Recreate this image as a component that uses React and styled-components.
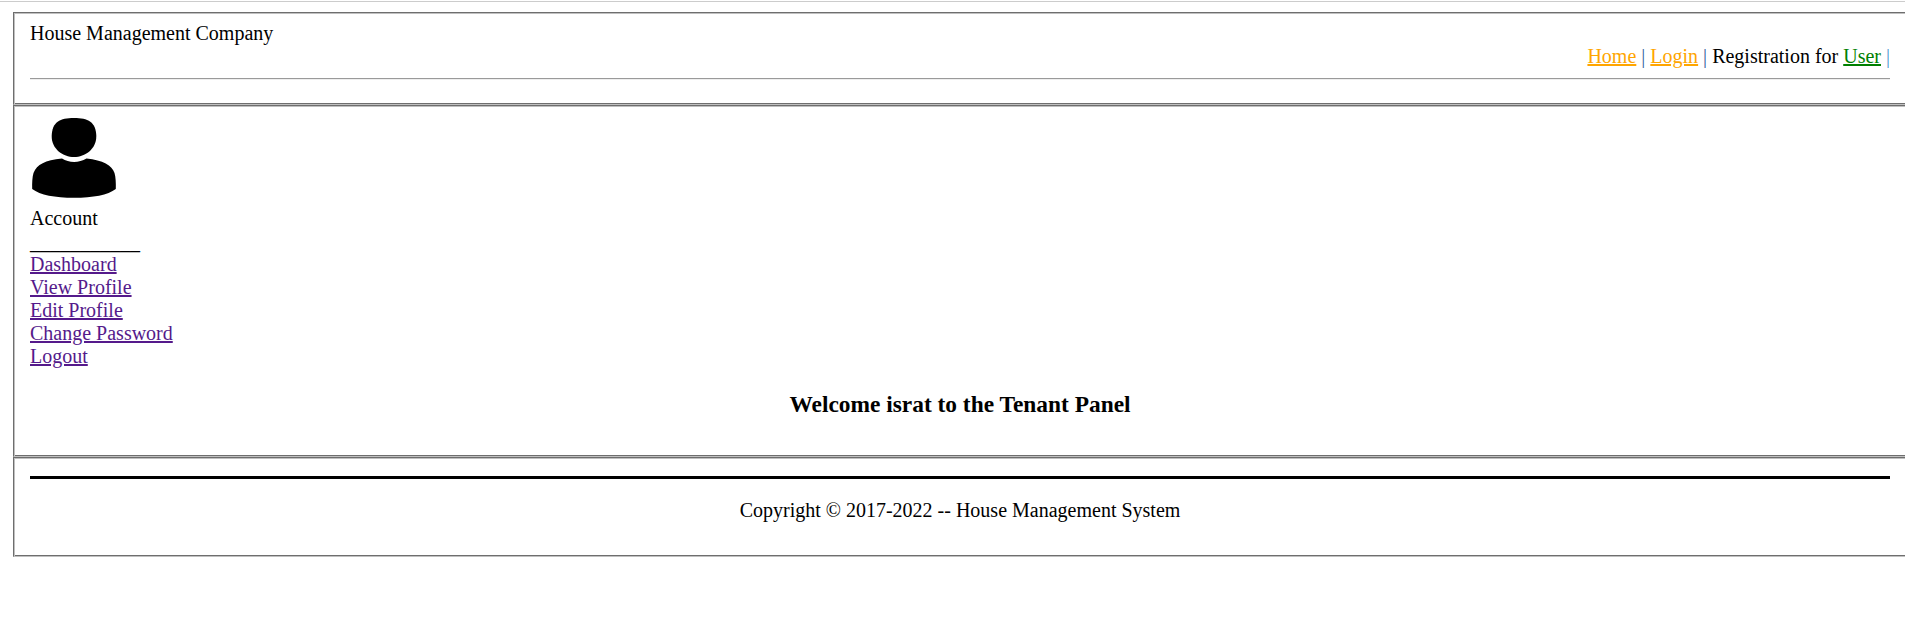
import React from "react";
import styled, { createGlobalStyle } from "styled-components";

const GlobalStyle = createGlobalStyle`
  html { overflow: hidden; background: #fff; }
  body {
    margin: 0;
    color: #000;
    font-family: "Liberation Serif", "Times New Roman", serif;
    font-size: 20px;
    line-height: 23px;
  }
`;

const Page = styled.div`
  box-sizing: border-box;
  height: 640px;
  overflow: hidden;
  padding: 11px 0 0 13px;
`;

const TopLine = styled.div`
  height: 1px;
  margin: -10px 0 10px -13px;
  background: #ccc;
`;

const Panel = styled.section`
  box-sizing: border-box;
  width: 1894px;
  height: ${(p) => p.$height}px;
  padding: ${(p) => p.$top || 8}px 16px 0;
  border: 1px solid #6e6e6e;
  border-right-color: #c0c0c0;
  border-bottom-color: #c0c0c0;
  box-shadow: inset 1px 1px 0 #c0c0c0, inset -1px -1px 0 #6e6e6e;
`;

const Brand = styled.div`
  width: max-content;
`;

const TopNav = styled.nav`
  text-align: right;
`;

const Link = styled.a`
  color: ${(p) => p.$color || "#551a8b"};
  text-decoration: underline;
  text-decoration-thickness: 2px;
  text-underline-offset: 1px;
`;

const Bar = styled.span`
  color: ${(p) => p.$color || "#2f5f9a"};
`;

const Divider = styled.hr`
  height: 1px;
  margin: 10px 0 0;
  border: 0;
  border-bottom: 1px solid #eee;
  background: #9a9a9a;
`;

const Avatar = styled.svg`
  display: block;
  width: 88px;
  height: 88px;
  margin-top: -1px;
`;

const Account = styled.div`
  margin-top: 6px;
`;

const Underscores = styled.div`
  margin: 1px 0 -1px;
`;

const Menu = styled.nav`
  display: flex;
  flex-direction: column;
  align-items: flex-start;
`;

const Title = styled.h3`
  margin: 23px 0 0;
  font-size: 23.4px;
  line-height: 27px;
  text-align: center;
`;

const ThickRule = styled.hr`
  height: 3px;
  margin: 10px 0 0;
  border: 0;
  background: #000;
`;

const Copyright = styled.p`
  margin: 20px 0 0;
  text-align: center;
`;

const menuItems = ["Dashboard", "View Profile", "Edit Profile", "Change Password", "Logout"];

export default function App() {
  return (
    <Page>
      <GlobalStyle />
      <TopLine />
      <Panel as="header" $height={93} $top={9}>
        <Brand>House Management Company</Brand>
        <TopNav>
          <Link $color="orange">Home</Link> <Bar>|</Bar>{" "}
          <Link $color="orange">Login</Link> <Bar>|</Bar> Registration for{" "}
          <Link $color="green">User</Link> <Bar $color="#4f97d0">|</Bar>
        </TopNav>
        <Divider />
      </Panel>
      <Panel as="main" $height={352}>
        <Avatar viewBox="0 0 88 88">
          <path d="M44 5C58 5 66 9 66.300 23C66.500 36 55 44 44 44C33 44 21.500 36 21.700 23C22 9 30 5 44 5Z" />
          <path d="M32 45.500C39 50 49 50 56.500 45.500C73 47.500 82 52 84.500 60C85.700 64 86 70 85.800 76C78 82 63 84.800 44 84.800C25 84.800 10 82 2.200 76C2 70 2.300 64 3.500 60C7 51 15 47.500 32 45.500Z" />
        </Avatar>
        <Account>Account</Account>
        <Underscores>___________</Underscores>
        <Menu>
          {menuItems.map((item) => (
            <Link key={item}>{item}</Link>
          ))}
        </Menu>
        <Title>Welcome israt to the Tenant Panel</Title>
      </Panel>
      <Panel as="footer" $height={100}>
        <ThickRule />
        <Copyright>Copyright © 2017-2022 -- House Management System</Copyright>
      </Panel>
    </Page>
  );
}
